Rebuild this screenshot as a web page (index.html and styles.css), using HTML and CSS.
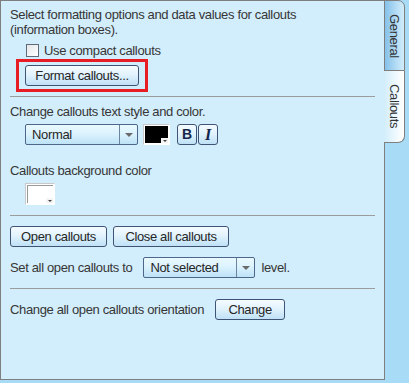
FILE: index.html
```html
<!DOCTYPE html>
<html>
<head>
<meta charset="utf-8">
<link rel="stylesheet" href="styles.css">
</head>
<body>
<div class="app">
  <div class="panel">
    <p class="intro">Select formatting options and data values for callouts<br>(information boxes).</p>
    <label class="check-row"><span class="checkbox"></span><span>Use compact callouts</span></label>
    <div class="highlight"><button class="btn btn-format">Format callouts...</button></div>
    <div class="sep sep-1"></div>
    <p class="label label-style">Change callouts text style and color.</p>
    <div class="row row-style">
      <div class="select select-style"><span class="select-text">Normal</span><span class="select-arrow"><span class="tri"></span></span></div>
      <div class="swatch swatch-black"><span class="swatch-fill fill-black"></span><span class="swatch-drop"><span class="mini-tri"></span></span></div>
      <div class="fmt-group">
        <button class="btn btn-icon btn-bold">B</button>
        <button class="btn btn-icon btn-italic">I</button>
      </div>
    </div>
    <p class="label label-bg">Callouts background color</p>
    <div class="row row-bg">
      <div class="swatch swatch-white"><span class="swatch-fill fill-white"></span><span class="swatch-drop"><span class="mini-tri"></span></span></div>
    </div>
    <div class="sep sep-2"></div>
    <div class="row row-buttons">
      <button class="btn btn-open">Open callouts</button>
      <button class="btn btn-close">Close all callouts</button>
    </div>
    <div class="row row-level">
      <span class="text">Set all open callouts to</span>
      <div class="select select-level"><span class="select-text">Not selected</span><span class="select-arrow"><span class="tri"></span></span></div>
      <span class="text">level.</span>
    </div>
    <div class="sep sep-3"></div>
    <div class="row row-orient">
      <span class="text">Change all open callouts orientation</span>
      <button class="btn btn-change">Change</button>
    </div>
  </div>
  <div class="tabs">
    <div class="tab tab-general"><span class="tab-label">General</span></div>
    <div class="tab tab-callouts"><span class="tab-label">Callouts</span></div>
  </div>
</div>
</body>
</html>
```

FILE: styles.css
```css
* { box-sizing: border-box; }
html, body {
  margin: 0;
  padding: 0;
  background: #a7dbf6;
  font-family: "Liberation Sans", Arial, sans-serif;
  font-size: 13px;
  letter-spacing: -0.35px;
  color: #363636;
}
.app {
  display: flex;
  align-items: flex-start;
  width: 409px;
  height: 383px;
}
.panel {
  width: 385px;
  height: 380px;
  flex: none;
  border: 1px solid #7f7f7f;
  background: #d2edfb;
  padding: 6px 9px 0 9px;
}
p { margin: 0; }
.intro { line-height: 15px; }
.check-row {
  display: flex;
  align-items: center;
  gap: 5px;
  height: 17px;
  margin-top: 5px;
  padding-left: 16px;
  line-height: 17px;
}
.checkbox {
  width: 13px;
  height: 13px;
  border: 1px solid #5f6b78;
  background: linear-gradient(135deg, #e4e6e8, #ffffff);
  flex: none;
}
.highlight {
  display: inline-block;
  margin-left: 6px;
  border: 3px solid #e81c24;
  padding: 3px 6px;
  vertical-align: top;
}
.btn {
  font-family: "Liberation Sans", Arial, sans-serif;
  font-size: 13px;
  letter-spacing: -0.35px;
  color: #262626;
  height: 21px;
  padding: 0 6px;
  border: 1px solid #3f5474;
  border-radius: 3px;
  background: linear-gradient(#f5fbff 0%, #e2f3fd 45%, #bfe1f6 100%);
  line-height: 19px;
  display: block;
  margin: 0;
}
.btn-format { width: 114px; }
.sep {
  height: 1px;
  background: #9c9c9c;
}
.sep-1 { margin-top: 4px; }
.label { line-height: 15px; }
.label-style { margin-top: 7px; }
.row { display: flex; align-items: center; }
.row-style { margin-top: 5px; padding-left: 15px; height: 21px; }
.select {
  display: flex;
  height: 21px;
  border: 1px solid #4c6789;
  border-radius: 2px;
  background: linear-gradient(#eaf9ff 0%, #dcf3fe 45%, #bde2f6 100%);
  color: #262626;
}
.select-text {
  flex: 1;
  line-height: 19px;
  padding-left: 6px;
}
.select-arrow {
  width: 18px;
  border-left: 1px solid #6d84a0;
  display: flex;
  align-items: center;
  justify-content: center;
}
.tri {
  width: 0;
  height: 0;
  border-left: 4px solid transparent;
  border-right: 4px solid transparent;
  border-top: 4px solid #6a6a6a;
}
.select-style { width: 113px; }
.swatch {
  position: relative;
  width: 27px;
  height: 21px;
  border: 1px solid #c9c9c9;
  border-right-color: #ffffff;
  border-bottom-color: #ffffff;
  background: #ffffff;
  padding: 1px;
  flex: none;
}
.swatch-black { margin-left: 5px; }
.swatch-fill {
  display: block;
  width: 100%;
  height: 100%;
}
.fill-black { background: #000000; }
.fill-white {
  background: #ffffff;
  border-top: 1px solid #9a9a9a;
  border-left: 1px solid #9a9a9a;
}
.swatch-drop {
  position: absolute;
  right: 1px;
  bottom: 1px;
  width: 7px;
  height: 5px;
  background: #f4f4f4;
  display: flex;
  align-items: center;
  justify-content: center;
}
.mini-tri {
  width: 0;
  height: 0;
  border-left: 2px solid transparent;
  border-right: 2px solid transparent;
  border-top: 2px solid #404040;
}
.fmt-group { display: flex; gap: 1px; margin-left: 7px; }
.btn-icon {
  width: 20px;
  padding: 0;
  text-align: center;
  color: #16264a;
  font-weight: bold;
  letter-spacing: 0;
}
.btn-bold { font-size: 14px; }
.btn-italic {
  font-family: "Liberation Serif", "Times New Roman", serif;
  font-style: italic;
  font-size: 16px;
}
.label-bg { margin-top: 18px; }
.row-bg { margin-top: 5px; padding-left: 15px; }
.swatch-white { width: 30px; height: 22px; }
.sep-2 { margin-top: 10px; }
.row-buttons { margin-top: 10px; gap: 6px; }
.btn-open { width: 97px; }
.btn-close { width: 116px; }
.row-level { margin-top: 10px; }
.row-level .select-level { width: 112px; margin-left: 11px; margin-right: 6px; }
.sep-3 { margin-top: 10px; }
.row-orient { margin-top: 10px; }
.btn-change { width: 70px; margin-left: 11px; }
.tabs {
  display: flex;
  flex-direction: column;
  margin-left: -1px;
  width: 21px;
}
.tab {
  display: flex;
  align-items: center;
  justify-content: center;
  color: #333;
}
.tab-label {
  writing-mode: vertical-rl;
  font-size: 13px;
  line-height: 15px;
}
.tab-general {
  height: 71px;
  border: 1px solid #7f7f7f;
  border-radius: 0 7px 0 0;
  background: linear-gradient(to right, #84c1ea 0%, #b5dcf5 60%, #d2edfb 100%);
}
.tab-callouts {
  height: 72px;
  border: 1px solid #7f7f7f;
  border-left: 0;
  border-top: 0;
  border-radius: 0 0 7px 0;
  padding-left: 1px;
  background: linear-gradient(to right, #d2edfb 0%, #f4fbff 70%, #ffffff 100%);
}
```
